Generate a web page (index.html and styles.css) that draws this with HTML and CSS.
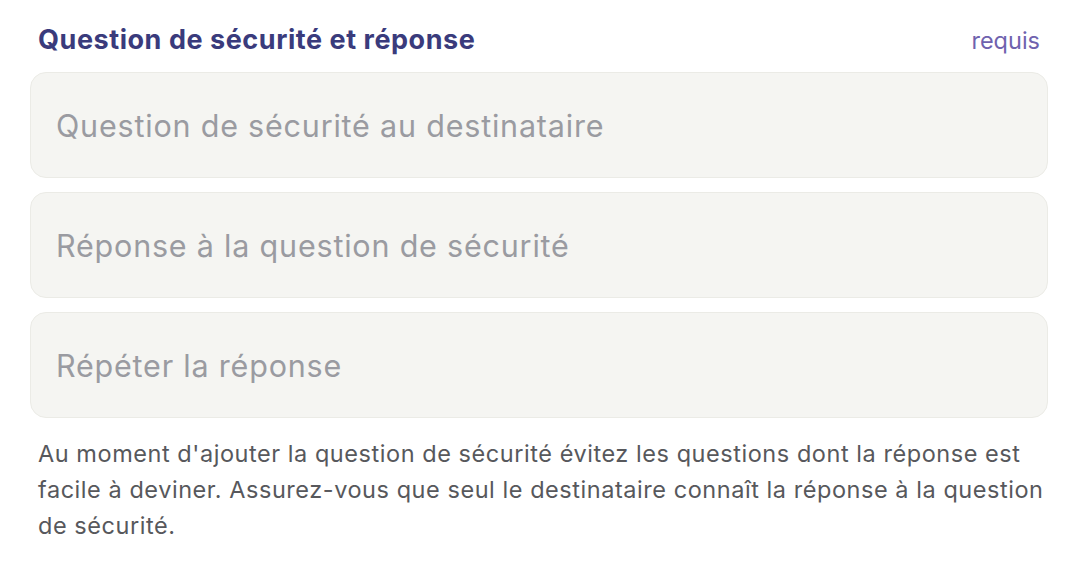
FILE: index.html
```html
<!DOCTYPE html>
<html lang="fr">
<head>
<meta charset="utf-8">
<link rel="stylesheet" href="styles.css">
</head>
<body>
<section class="field">
  <div class="field-head">
    <h2 class="field-title">Question de sécurité et réponse</h2>
    <span class="field-req">requis</span>
  </div>
  <div class="inputs">
    <input class="input" type="text" placeholder="Question de sécurité au destinataire">
    <input class="input" type="text" placeholder="Réponse à la question de sécurité">
    <input class="input" type="text" placeholder="Répéter la réponse">
  </div>
  <p class="help">Au moment d'ajouter la question de sécurité évitez les questions dont la réponse est facile à deviner. Assurez-vous que seul le destinataire connaît la réponse à la question de sécurité.</p>
</section>
</body>
</html>
```
FILE: styles.css
```css
html, body {
  margin: 0;
  padding: 0;
  background: #ffffff;
}
body {
  font-family: Inter, "Liberation Sans", sans-serif;
}
.field {
  padding: 22px 31px 0 30px;
}
.field-head {
  display: flex;
  justify-content: space-between;
  align-items: baseline;
  padding: 1px 8px 0 8px;
  height: 49px;
}
.field-title {
  margin: 0;
  font-family: Inter, "Liberation Sans", sans-serif;
  font-weight: 700;
  font-size: 27px;
  color: #3a3b7c;
  letter-spacing: 0.55px;
}
.field-req {
  font-size: 23.5px;
  color: #6f62ae;
}
.inputs {
  display: flex;
  flex-direction: column;
  gap: 14px;
}
.input {
  box-sizing: border-box;
  width: 100%;
  height: 106px;
  margin: 0;
  padding: 0 25px;
  border: 1.5px solid #ebebe6;
  border-radius: 16px;
  background: #f5f5f2;
  font-family: Inter, "Liberation Sans", sans-serif;
  font-size: 30.5px;
  letter-spacing: 0.8px;
  color: #333;
  outline: none;
}
.input::placeholder {
  color: #9a9ba1;
  opacity: 1;
}
.help {
  margin: 18px 0 0 0;
  padding: 0 0 0 8px;
  font-size: 23.5px;
  letter-spacing: 0.55px;
  line-height: 36px;
  color: #57585c;
}
```
